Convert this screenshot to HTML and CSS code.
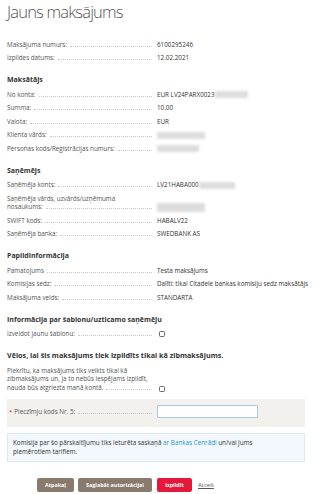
FILE: index.html
```html
<!DOCTYPE html>
<html lang="lv">
<head>
<meta charset="utf-8">
<title>Jauns maksājums</title>
<link rel="stylesheet" href="styles.css">
</head>
<body>
<div class="page">
  <h1 class="title">Jauns maksājums</h1>

  <div class="group top">
    <div class="row"><div class="lbl"><span>Maksājuma numurs:</span><span class="dots"></span></div><div class="val">6100295246</div></div>
    <div class="row"><div class="lbl"><span>Izpildes datums:</span><span class="dots"></span></div><div class="val">12.02.2021</div></div>
  </div>

  <h2 class="sec">Maksātājs</h2>
  <div class="group">
    <div class="row"><div class="lbl"><span>No konta:</span><span class="dots"></span></div><div class="val">EUR LV24PARX0023<span class="blur w33"></span></div></div>
    <div class="row"><div class="lbl"><span>Summa:</span><span class="dots"></span></div><div class="val">10.00</div></div>
    <div class="row"><div class="lbl"><span>Valota:</span><span class="dots"></span></div><div class="val">EUR</div></div>
    <div class="row"><div class="lbl"><span>Klienta vārds:</span><span class="dots"></span></div><div class="val"><span class="blur w48"></span></div></div>
    <div class="row"><div class="lbl"><span>Personas kods/Reģistrācijas numurs:</span><span class="dots"></span></div><div class="val"><span class="blur w42"></span></div></div>
  </div>

  <h2 class="sec">Saņēmējs</h2>
  <div class="group">
    <div class="row"><div class="lbl"><span>Saņēmēja konts:</span><span class="dots"></span></div><div class="val">LV21HABA000<span class="blur w36"></span></div></div>
    <div class="row multi"><div class="lbl"><div>Saņēmēja vārds, uzvārds/uzņēmuma</div><div class="ln"><span>nosaukums:</span><span class="dots"></span></div></div><div class="val"><span class="blur w48 tall"></span></div></div>
    <div class="row"><div class="lbl"><span>SWIFT kods:</span><span class="dots"></span></div><div class="val">HABALV22</div></div>
    <div class="row"><div class="lbl"><span>Saņēmēja banka:</span><span class="dots"></span></div><div class="val">SWEDBANK AS</div></div>
  </div>

  <h2 class="sec">Papildinformācija</h2>
  <div class="group">
    <div class="row"><div class="lbl"><span>Pamatojums</span><span class="dots"></span></div><div class="val">Testa maksājums</div></div>
    <div class="row"><div class="lbl"><span>Komisijas sedz:</span><span class="dots"></span></div><div class="val nowrap">Dalīti: tikai Citadele bankas komisiju sedz maksātājs</div></div>
    <div class="row"><div class="lbl"><span>Maksājuma veids:</span><span class="dots"></span></div><div class="val">STANDARTA</div></div>
  </div>

  <h2 class="sec">Informācija par šablonu/uzticamo saņēmēju</h2>
  <div class="group">
    <div class="row"><div class="lbl"><span>Izveidot jaunu šablonu:</span><span class="dots"></span></div><div class="val"><span class="check"></span></div></div>
  </div>

  <h2 class="sec big">Vēlos, lai šis maksājums tiek izpildīts tikai kā zibmaksājums.</h2>
  <div class="group">
    <div class="row multi"><div class="lbl"><div>Piekrītu, ka maksājums tiks veikts tikai kā</div><div>zibmaksājums un, ja to nebūs iespējams izpildīt,</div><div class="ln"><span>nauda būs atgriezta manā kontā.</span><span class="dots"></span></div></div><div class="val"><span class="check"></span></div></div>
  </div>

  <div class="codebox">
    <div class="lbl"><span class="req">*</span><span>Pieczīmju kods Nr. 5:</span><span class="dots"></span></div>
    <input class="code" type="text">
  </div>

  <div class="info">Komisija par šo pārskaitījumu tiks ieturēta saskaņā <a href="#">ar Bankas Cenrādi</a> un/vai Jums piemērotiem tarifiem.</div>

  <div class="actions">
    <button class="btn gray back">Atpakaļ</button>
    <button class="btn gray save">Saglabāt autorizācijai</button>
    <button class="btn red">Izpildīt</button>
    <a class="cancel" href="#">Atcelt</a>
  </div>
</div>
</body>
</html>
```

FILE: styles.css
```css
* { box-sizing: border-box; }
html, body { margin: 0; padding: 0; background: #fff; }
body {
  font-family: "Open Sans", "DejaVu Sans", sans-serif;
  color: #555;
  font-size: 6.3px;
}
.page {
  width: 312px;
  padding: 0 7px 0 7px;
}
.title {
  margin: 0;
  padding-top: 1px;
  font-size: 16.5px;
  font-weight: 300;
  line-height: 22px;
  color: #555;
  letter-spacing: -0.8px;
}
.group.top { margin-top: 15px; }
.sec {
  margin: 10px 0 3px 0;
  font-size: 7px;
  font-weight: 700;
  line-height: 10px;
  color: #333;
}
.sec.big { font-size: 7.2px; margin-top: 9px; margin-bottom: 4px; }
.row {
  display: grid;
  grid-template-columns: 145px 1fr;
  column-gap: 5px;
  line-height: 8.5px;
  padding: 2.5px 0;
}
.row.multi { align-items: end; }
.lbl { display: flex; align-items: baseline; color: #555; }
.row.multi .lbl { display: block; }
.ln { display: flex; align-items: baseline; }
.dots {
  flex: 1;
  margin-left: 3px;
  border-bottom: 1px dotted #c9c9c9;
  height: 0;
}
.val { color: #333; display: flex; align-items: center; }
.val.nowrap { white-space: nowrap; }
.blur {
  display: inline-block;
  height: 7px;
  background: #dcdcdc;
  filter: blur(1.6px);
}
.blur.tall { height: 9px; }
.w33 { width: 33px; }
.w36 { width: 36px; }
.w42 { width: 42px; }
.w48 { width: 48px; }
.check {
  display: inline-block;
  width: 6px;
  height: 6px;
  border: 1px solid #666;
  border-radius: 1.5px;
  margin-left: 2px;
  background: #fff;
}
.codebox {
  margin-top: 4px;
  background: #f3f1ee;
  display: grid;
  grid-template-columns: 145px 101px;
  column-gap: 5px;
  align-items: center;
  padding: 6px 0 9px 0;
  line-height: 8.5px;
}
.codebox .lbl { padding-left: 2px; align-self: end; padding-bottom: 1px; }
.req { color: #e3173a; margin-right: 2px; font-size: 6px; }
.code {
  width: 101px;
  height: 13px;
  margin: 0;
  padding: 0;
  border: 1px solid #a8c8e3;
  border-radius: 1px;
  background: #fff;
}
.info {
  margin-top: 6px;
  background: #f2f8fd;
  border: 1px solid #dbe9f6;
  padding: 4.5px 16px 4.5px 5px;
  line-height: 9px;
  color: #333;
  font-size: 6.3px;
}
.info a { color: #1b98d5; text-decoration: none; }
.actions {
  margin-top: 16px;
  padding-left: 30px;
  display: flex;
  align-items: center;
}
.btn {
  font-family: "Open Sans", "DejaVu Sans", sans-serif;
  font-size: 5.4px;
  font-weight: 700;
  color: #fff;
  border: 0;
  border-radius: 2px;
  height: 14px;
  padding: 0;
  margin: 0;
  line-height: 14px;
  text-align: center;
}
.btn.gray { background: #887a6c; }
.btn.back { width: 37px; }
.btn.save { width: 74px; margin-left: 4px; }
.btn.red { background: #e5173b; width: 35px; margin-left: 5px; }
.cancel {
  color: #555;
  font-size: 6px;
  margin-left: 6px;
  text-decoration: underline;
}
```
